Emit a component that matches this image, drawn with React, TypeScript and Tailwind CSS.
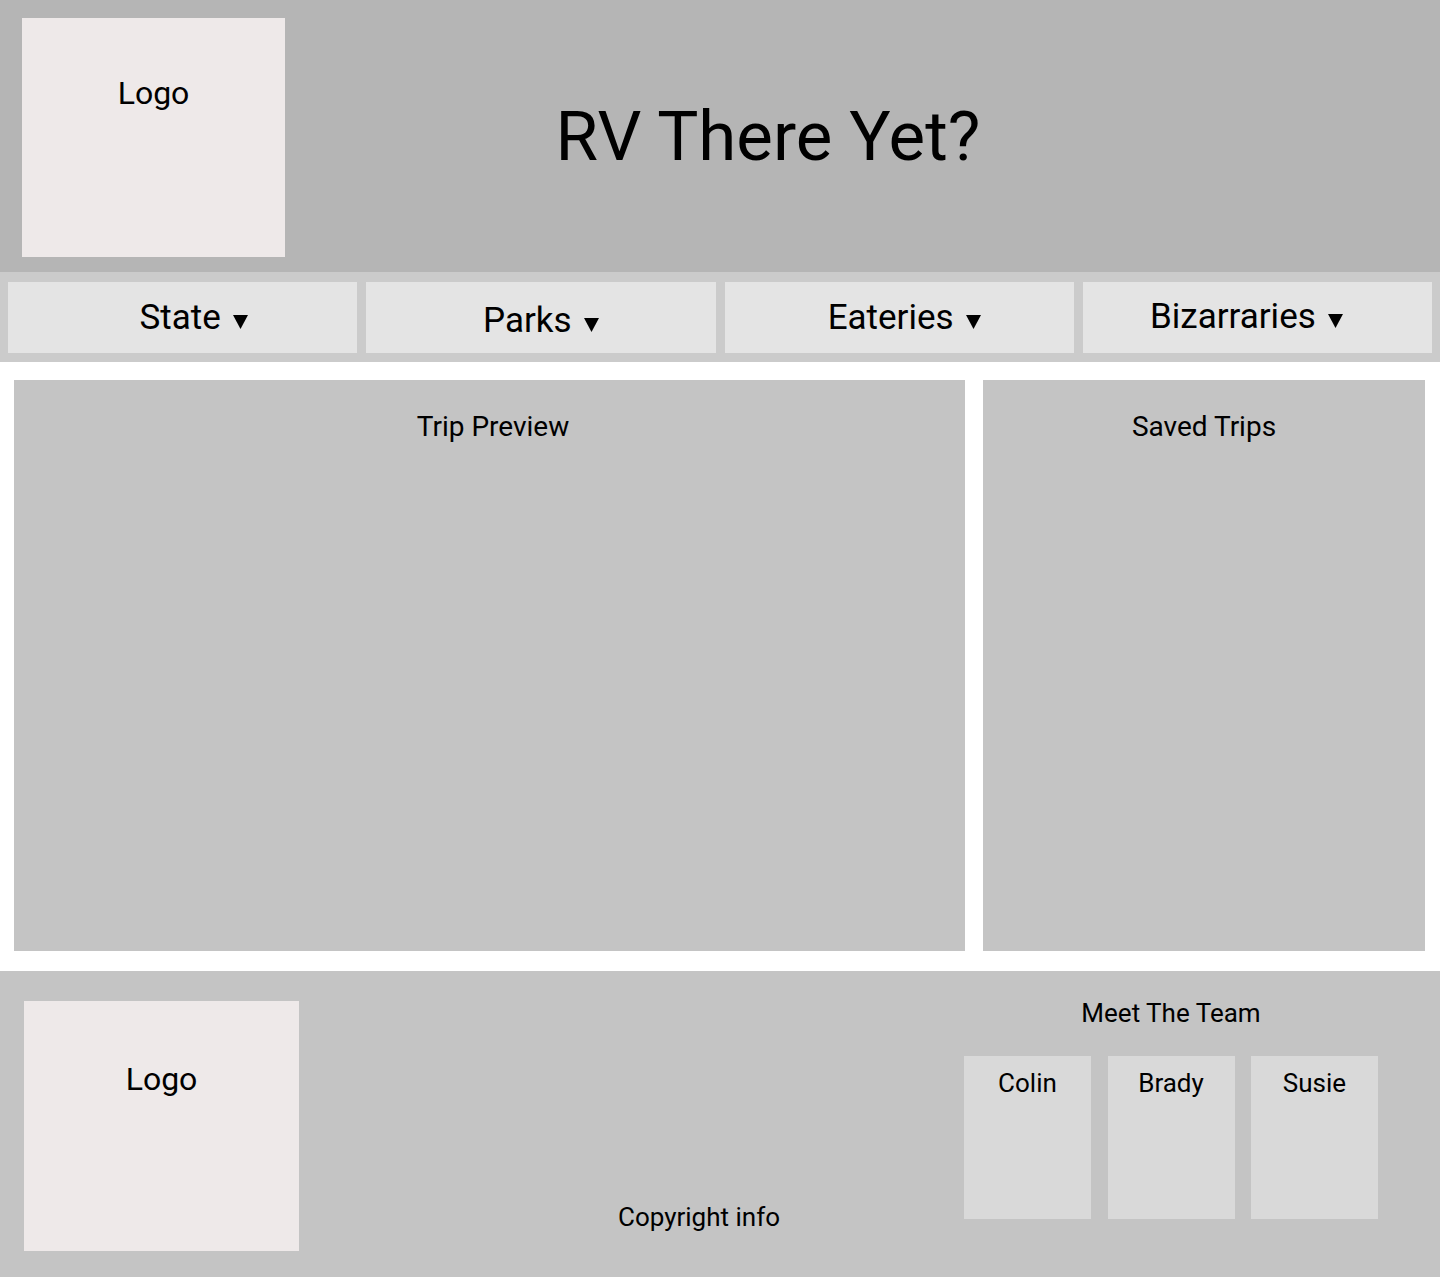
import React from "react";

// offsets copied from the mockup, each label sits a little off-center
const navItems = [
  { label: "State", cls: "pl-[22px] pb-[18px]" },
  { label: "Parks", cls: "pb-[15px]" },
  { label: "Eateries", cls: "pl-[10px] pb-[18px]" },
  { label: "Bizarraries", cls: "pr-[22px] pb-[19px]" },
];
const team = ["Colin", "Brady", "Susie"];

function Caret() {
  return (
    <svg width="15" height="14" viewBox="0 0 15 14" className="mb-[6px] shrink-0" aria-hidden="true">
      <polygon points="0,0 15,0 7.5,14" fill="#000" />
    </svg>
  );
}

export default function App() {
  return (
    <div className="w-[1440px] min-h-[1277px] bg-white text-black font-['Roboto',sans-serif]">
      {/* Header */}
      <header className="flex h-[272px] bg-[#b5b5b5] pl-[22px] pt-[18px] pb-[15px]">
        <div className="w-[263px] h-[239px] bg-[#eee9e9] pt-[59px] text-center text-[32px] leading-none">
          Logo
        </div>
        <div className="flex flex-1 items-center justify-center pr-[189px] pb-[3px]">
          <h1 className="text-[69px] leading-none">RV There Yet?</h1>
        </div>
      </header>

      {/* Nav */}
      <nav className="grid h-[90px] grid-cols-4 gap-[9px] bg-[#cbcbcb] px-2 pt-[10px] pb-[9px]">
        {navItems.map((item) => (
          <button
            key={item.label}
            className={`flex items-end justify-center gap-3 bg-[#e4e4e4] text-[35px] leading-none ${item.cls}`}
          >
            <span>{item.label}</span>
            <Caret />
          </button>
        ))}
      </nav>

      {/* Main */}
      <main className="flex h-[609px] gap-[18px] pl-[14px] pr-[15px] pt-[18px] pb-[20px]">
        <section className="flex-1 bg-[#c4c4c4] pt-[33px] text-center text-[28px] leading-none">
          <h2 className="pl-[7px]">Trip Preview</h2>
        </section>
        <section className="w-[442px] bg-[#c4c4c4] pt-[33px] text-center text-[28px] leading-none">
          <h2>Saved Trips</h2>
        </section>
      </main>

      {/* Footer */}
      <footer className="flex h-[306px] bg-[#c4c4c4] pl-[24px] pr-[62px] pt-[30px] pb-[26px]">
        <div className="w-[275px] h-[250px] bg-[#eee9e9] pt-[62px] text-center text-[32px] leading-none">
          Logo
        </div>
        <div className="flex flex-1 items-end justify-center pl-[135px] pb-[21px] text-[26px] leading-none">
          <p>Copyright info</p>
        </div>
        <div className="flex w-[414px] flex-col -mt-[1px]">
          <p className="text-center text-[26px] leading-none">Meet The Team</p>
          <div className="mt-[30px] flex justify-between">
            {team.map((name) => (
              <div
                key={name}
                className="h-[163px] w-[127px] bg-[#d9d9d9] pt-[14px] text-center text-[26px] leading-none"
              >
                {name}
              </div>
            ))}
          </div>
        </div>
      </footer>
    </div>
  );
}
